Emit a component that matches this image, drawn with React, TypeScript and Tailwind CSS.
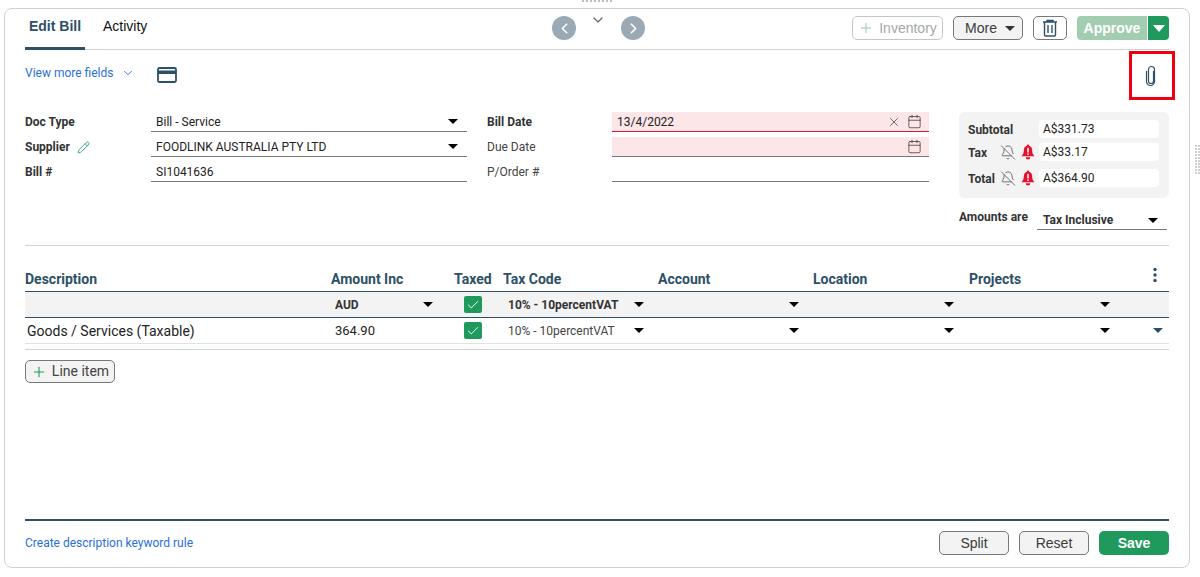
import { BellOff, Calendar, Check, ChevronDown, ChevronLeft, ChevronRight, Pencil, Plus, X } from "lucide-react";
import type { ReactNode } from "react";

const btn = "flex h-[24px] items-center justify-center rounded-[5px] border border-[#77787a] bg-[#f3f3f3] [font-family:Liberation_Sans,sans-serif] text-[14px] text-[#3c3c3c]";

function Caret({ className = "h-[5px] w-[10px] text-black" }: { className?: string }) {
  return (
    <svg viewBox="0 0 10 5" preserveAspectRatio="none" className={className}>
      <path d="M0 0h10L5 5z" fill="currentColor" />
    </svg>
  );
}

function Tick() {
  return (
    <span className="flex h-[17px] w-[18px] items-center justify-center rounded-[2px] bg-[#1f9a5c]">
      <Check size={14} strokeWidth={1.6} className="text-white" />
    </span>
  );
}

function RedBell() {
  return (
    <svg width="14" height="18" viewBox="0 0 15 17" className="shrink-0">
      <path d="M7.500 0.500a1.200 1.200 0 0 1 1.200 1.300C11 2.500 12 4.500 12 7c0 3 .7 4.500 2.500 6H.5C2.300 11.500 3 10 3 7 3 4.500 4 2.500 6.300 1.800A1.200 1.200 0 0 1 7.500 .5z" fill="#e3102f" />
      <path d="M5 14h5a2.500 2.500 0 0 1-5 0z" fill="#e3102f" />
      <rect x="6.700" y="4" width="1.600" height="5" fill="#fff" />
      <rect x="6.700" y="10" width="1.600" height="1.600" fill="#fff" />
    </svg>
  );
}

function FieldLine({ children, tone = "border-[#77787a]", bg = "" }: { children?: ReactNode; tone?: string; bg?: string }) {
  return (
    <div className={`flex h-[20px] items-center justify-between border-b pl-[5px] text-[12px] text-[#222] ${tone} ${bg}`}>
      {children}
    </div>
  );
}

function Cal() {
  return <Calendar size={15} strokeWidth={1.2} className="text-[#333]" />;
}

function TotalRow({ label, value, bells, className = "" }: { label: string; value: string; bells?: boolean; className?: string }) {
  return (
    <div className={`flex h-[18px] items-center ${className}`}>
      <span className="w-[32px] shrink-0 pt-[2px] text-[12px] font-bold whitespace-nowrap text-[#333]">{label}</span>
      {bells ? (
        <div className="flex w-[39px] shrink-0 items-center justify-end gap-[5px] pr-[4px]">
          <BellOff size={17} strokeWidth={1.4} className="text-[#666]" />
          <RedBell />
        </div>
      ) : (
        <div className="w-[39px] shrink-0" />
      )}
      <div className="flex h-[18px] w-[120px] items-center rounded-[4px] bg-white pl-[4px] text-[12px] text-[#222]">{value}</div>
    </div>
  );
}

const headers = ["Description", "Amount Inc", "Taxed", "Tax Code", "Account", "Location", "Projects"];
const cols = "grid grid-cols-[306px_96px_76px_155px_155px_156px_200px]";

export default function App() {
  return (
    <div className="relative h-[577px] w-[1200px] overflow-hidden bg-white pt-[8px] pl-[4px] [font-family:Roboto,sans-serif]">
      {/* drag handles */}
      <svg width="30" height="2" className="absolute top-0 left-[582px]">
        <line x1="0" y1="1" x2="30" y2="1" stroke="#bdbdbd" strokeWidth="2" strokeDasharray="2 2" />
      </svg>
      <svg width="5" height="30" className="absolute top-[145px] left-[1195px]">
        <line x1="1" y1="0" x2="1" y2="30" stroke="#cfcfcf" strokeWidth="2" strokeDasharray="2 1" />
        <line x1="4" y1="0" x2="4" y2="30" stroke="#cfcfcf" strokeWidth="2" strokeDasharray="2 1" />
      </svg>

      <div className="relative flex h-[560px] w-[1186px] flex-col rounded-[8px] border border-[#cbd3d3] px-[20px]">
        {/* top bar */}
        <div className="flex h-[41px] shrink-0 border-b border-[#cbd3d3]">
          <div className="flex h-[41px] w-[60px] shrink-0 justify-center border-b-[3px] border-[#2d5068] pt-[9px] [font-family:Liberation_Sans,sans-serif] text-[14px] leading-[17px] font-bold text-[#2d5068]">
            Edit Bill
          </div>
          <div className="ml-[18px] w-[449px] shrink-0 pt-[9px] [font-family:Liberation_Sans,sans-serif] text-[14px] leading-[17px] text-[#111]">Activity</div>
          <div className="flex w-[93px] shrink-0 items-start pt-[7px]">
            <span className="flex h-[24px] w-[24px] items-center justify-center rounded-full bg-[#9aa9b3]">
              <ChevronLeft size={17} strokeWidth={2.4} className="text-white" />
            </span>
            <ChevronDown size={16} strokeWidth={1.8} className="mt-[-4px] ml-[14px] text-[#666]" />
            <span className="ml-[15px] flex h-[24px] w-[24px] items-center justify-center rounded-full bg-[#9aa9b3]">
              <ChevronRight size={17} strokeWidth={2.4} className="text-white" />
            </span>
          </div>
          <div className="ml-auto flex items-start gap-[10px] pt-[7px]">
            <div className="flex h-[24px] w-[91px] items-center justify-center gap-[5px] rounded-[5px] border border-[#c4c6c6] [font-family:Liberation_Sans,sans-serif] text-[14px] text-[#a5a7a7]">
              <Plus size={16} strokeWidth={1.5} className="text-[#9bc9ab]" />
              Inventory
            </div>
            <div className={`${btn} w-[70px] gap-[8px] pl-[4px]`}>
              More
              <Caret className="h-[5px] w-[10px] text-[#333]" />
            </div>
            <div className="flex h-[24px] w-[34px] items-center justify-center rounded-[5px] border border-[#77787a]">
              <svg width="16" height="18" viewBox="0 0 16 18" fill="none" stroke="#2d5068" strokeWidth="1.4">
                <path d="M1 3h14M5 3V1.500h6V3M2.500 3v13a1 1 0 0 0 1 1h9a1 1 0 0 0 1-1V3M6 6v8M10 6v8" />
              </svg>
            </div>
            <div className="flex gap-px">
              <div className="flex h-[24px] w-[70px] items-center justify-center rounded-l-[4px] bg-[#a3cdb1] [font-family:Liberation_Sans,sans-serif] text-[14px] font-bold text-white">
                Approve
              </div>
              <div className="flex h-[24px] w-[21px] items-center justify-center rounded-r-[4px] bg-[#1f9a5c]">
                <Caret className="h-[7px] w-[12px] text-white" />
              </div>
            </div>
          </div>
        </div>

        {/* more fields */}
        <div className="flex h-[50px] shrink-0 items-start pt-[16px]">
          <span className="text-[12px] leading-[15px] text-[#2a6fdb]">View more fields</span>
          <ChevronDown size={14} strokeWidth={1.6} className="ml-[8px] text-[#2a6fdb]" />
          <svg width="20" height="16" viewBox="0 0 20 16" className="mt-[1px] ml-[22px]" fill="none">
            <rect x="1" y="1" width="18" height="14" rx="1.500" stroke="#2d5068" strokeWidth="1.800" />
            <rect x="1" y="3.500" width="18" height="3.500" fill="#2d5068" />
          </svg>
          <svg width="14" height="22" viewBox="0 0 14 22" fill="none" stroke="#2d5068" strokeWidth="1.200" className="mt-[-1px] mr-[11px] ml-auto">
            <path d="M9.500 6v10a2.500 2.500 0 0 1-5 0V4.500a3 3 0 0 1 6 0v12a4 4 0 0 1-8 0V6" />
          </svg>
        </div>

        {/* annotation */}
        <div className="absolute top-[42px] right-[14px] h-[49px] w-[46px] border-[3px] border-[#ee0010]" />

        {/* form */}
        <div className="flex h-[146px] shrink-0 items-start border-b border-[#cbd3d3]">
          <div className="grid w-[442px] shrink-0 grid-cols-[126px_316px] gap-y-[5px] pt-[12px]">
            <span className="flex items-center text-[12px] font-bold text-[#333]">Doc Type</span>
            <FieldLine>
              Bill - Service
              <span className="pr-[9px]">
                <Caret />
              </span>
            </FieldLine>
            <span className="flex items-center gap-[7px] text-[12px] font-bold text-[#333]">
              Supplier
              <Pencil size={13} strokeWidth={1.5} className="text-[#1f9a5c]" />
            </span>
            <FieldLine>
              FOODLINK AUSTRALIA PTY LTD
              <span className="pr-[9px]">
                <Caret />
              </span>
            </FieldLine>
            <span className="flex items-center text-[12px] font-bold text-[#333]">Bill #</span>
            <FieldLine>SI1041636</FieldLine>
          </div>
          <div className="ml-[20px] grid w-[442px] shrink-0 grid-cols-[125px_317px] gap-y-[5px] pt-[12px]">
            <span className="flex items-center text-[12px] font-bold text-[#333]">Bill Date</span>
            <FieldLine tone="border-[#e3102f]" bg="bg-[#fde6e8]">
              13/4/2022
              <span className="flex items-center gap-[6px] pr-[7px]">
                <X size={14} strokeWidth={1.200} className="text-[#333]" />
                <Cal />
              </span>
            </FieldLine>
            <span className="flex items-center text-[12px] text-[#444]">Due Date</span>
            <FieldLine bg="bg-[#fde6e8]">
              <span />
              <span className="pr-[7px]">
                <Cal />
              </span>
            </FieldLine>
            <span className="flex items-center text-[12px] text-[#444]">P/Order #</span>
            <FieldLine />
          </div>
          <div className="ml-[30px] w-[210px] shrink-0 pt-[12px]">
            <div className="flex h-[86px] flex-col rounded-[6px] bg-[#f3f3f3] pt-[8px] pl-[9px]">
              <TotalRow label="Subtotal" value="A$331.73" />
              <TotalRow label="Tax" value="A$33.17" bells className="mt-[5px]" />
              <TotalRow label="Total" value="A$364.90" bells className="mt-[8px]" />
            </div>
            <div className="mt-[11px] flex items-start">
              <span className="w-[78px] shrink-0 text-[12px] leading-[16px] font-bold text-[#333]">Amounts are</span>
              <div className="flex h-[21px] w-[130px] items-center justify-between border-b border-[#77787a] pt-[2px] pr-[9px] pl-[6px] text-[12px] font-bold text-[#333]">
                Tax Inclusive
                <Caret />
              </div>
            </div>
          </div>
        </div>

        {/* table */}
        <div className="relative mt-[22px] flex h-[23px] shrink-0 items-center">
          <div className={cols}>
            {headers.map((h) => (
              <span key={h} className={`text-[14px] leading-[17px] font-bold text-[#2d5068] ${h === "Taxed" ? "pl-[27px]" : ""}`}>
                {h}
              </span>
            ))}
          </div>
          <svg width="4" height="16" viewBox="0 0 4 16" className="absolute top-[-1px] right-[12px]" fill="#2d5068">
            <circle cx="2" cy="2.500" r="1.700" />
            <circle cx="2" cy="8" r="1.700" />
            <circle cx="2" cy="13.500" r="1.700" />
          </svg>
        </div>
        <div className={`${cols} h-[27px] shrink-0 items-center border-y border-[#2d5068] bg-[#f3f3f3]`}>
          <span />
          <div className="mr-[-6px] flex items-center justify-between pl-[4px] text-[12px] font-bold text-[#333]">
            <span className="pt-[1px]">AUD</span>
            <Caret />
          </div>
          <div className="pl-[37px]">
            <Tick />
          </div>
          <div className="flex items-center justify-between pr-[14px] pl-[5px] text-[12px] font-bold text-[#333]">
            <span className="pt-[1px] whitespace-nowrap">10% - 10percentVAT</span>
            <Caret />
          </div>
          <div className="flex justify-end pr-[14px]">
            <Caret />
          </div>
          <div className="flex justify-end pr-[15px]">
            <Caret />
          </div>
          <div className="flex justify-end pr-[59px]">
            <Caret />
          </div>
        </div>
        <div className={`${cols} h-[26px] shrink-0 items-center border-b border-[#dfe3e3]`}>
          <span className="pt-[1px] pl-[2px] text-[14px] text-[#222]">Goods / Services (Taxable)</span>
          <span className="pl-[4px] text-[13px] text-[#222]">364.90</span>
          <div className="pl-[37px]">
            <Tick />
          </div>
          <div className="flex items-center justify-between pr-[14px] pl-[5px] text-[12px] text-[#444]">
            <span className="pt-[1px]">10% - 10percentVAT</span>
            <Caret />
          </div>
          <div className="flex justify-end pr-[14px]">
            <Caret />
          </div>
          <div className="flex justify-end pr-[15px]">
            <Caret />
          </div>
          <div className="flex items-center justify-end gap-[43px] pr-[6px]">
            <Caret />
            <Caret className="h-[5px] w-[10px] text-[#2d5068]" />
          </div>
        </div>
        <div className="mt-[5px] h-px shrink-0 bg-[#cbd3d3]" />
        <div className="mt-[10px] shrink-0">
          <div className="flex h-[23px] w-[90px] items-center justify-center gap-[5px] rounded-[5px] border border-[#77787a] bg-[#f3f3f3] text-[14px] text-[#444]">
            <Plus size={16} strokeWidth={1.600} className="text-[#1f9a5c]" />
            Line item
          </div>
        </div>

        {/* footer */}
        <div className="mt-auto mb-[12px] border-t-2 border-[#2d5068] pt-[10px]">
          <div className="flex items-center justify-between">
            <span className="text-[12px] text-[#2a6fdb]">Create description keyword rule</span>
            <div className="flex gap-[10px]">
              <div className={`${btn} w-[70px]`}>Split</div>
              <div className={`${btn} w-[70px]`}>Reset</div>
              <div className="flex h-[24px] w-[70px] items-center justify-center rounded-[5px] bg-[#1f9a5c] [font-family:Liberation_Sans,sans-serif] text-[14px] font-bold text-white">
                Save
              </div>
            </div>
          </div>
        </div>
      </div>
    </div>
  );
}
